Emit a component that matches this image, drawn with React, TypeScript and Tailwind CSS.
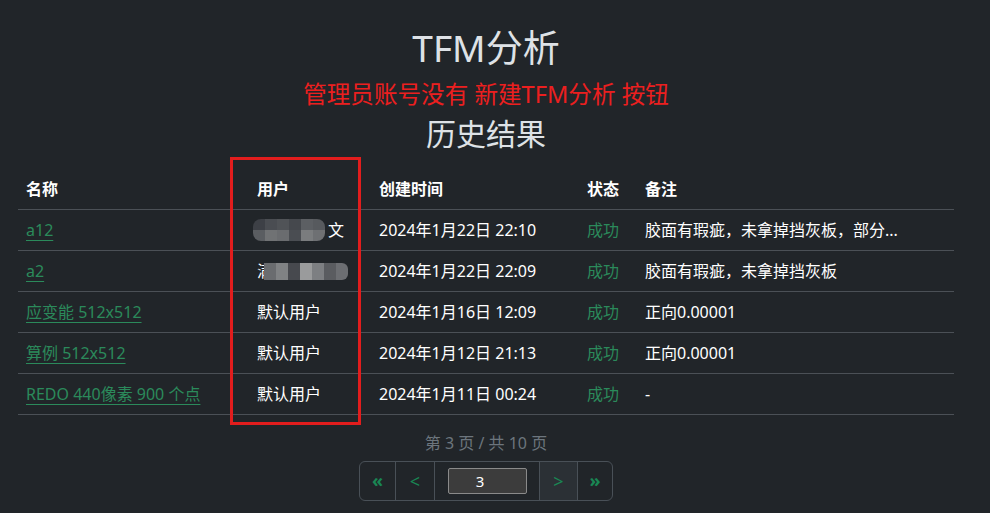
import React from "react";

const rows = [
  { name: "a12", user: "blur1", time: "2024年1月22日 22:10", note: "胶面有瑕疵，未拿掉挡灰板，部分..." },
  { name: "a2", user: "blur2", time: "2024年1月22日 22:09", note: "胶面有瑕疵，未拿掉挡灰板" },
  { name: "应变能 512x512", user: "默认用户", time: "2024年1月16日 12:09", note: "正向0.00001" },
  { name: "算例 512x512", user: "默认用户", time: "2024年1月12日 21:13", note: "正向0.00001" },
  { name: "REDO 440像素 900 个点", user: "默认用户", time: "2024年1月11日 00:24", note: "-" },
];

const blurTop = ["#3d4046", "#4a4d52", "#505357", "#45484d", "#5c5f63", "#575a5e"];
const blurBottom = ["#5a5d61", "#707274", "#6a6c6f", "#4a4d52", "#7a7c7e", "#6e7073"];
const blur2 = ["#6a6c6f", "#808284", "#47494e", "#9a9b9c", "#7d7f82", "#5a5c60", "#6c6e72"];

function Blur1() {
  return (
    <div className="flex items-center">
      <div className="flex flex-col overflow-hidden rounded-[8px] -ml-[4px]">
        <div className="flex">
          {blurTop.map((c, i) => (
            <div key={i} className="h-[11px] w-[12px]" style={{ backgroundColor: c }} />
          ))}
        </div>
        <div className="flex">
          {blurBottom.map((c, i) => (
            <div key={i} className="h-[11px] w-[12px]" style={{ backgroundColor: c }} />
          ))}
        </div>
      </div>
      <span className="ml-[3px]">文</span>
    </div>
  );
}

function Blur2() {
  return (
    <div className="flex items-center">
      <span className="inline-block w-[7px] overflow-hidden">满</span>
      <div className="flex overflow-hidden rounded-r-[6px]">
        {blur2.map((c, i) => (
          <div key={i} className="h-[17px] w-[12px]" style={{ backgroundColor: c }} />
        ))}
      </div>
    </div>
  );
}

export default function App() {
  return (
    <div className="relative h-[513px] w-full overflow-hidden bg-[#212529] font-['Noto_Sans','Noto_Sans_CJK_SC',sans-serif] text-[#dee2e6]">
      <div className="ml-[18px] w-[936px]">
        <div className="mt-[26px] flex h-[44px] items-center justify-center text-[37px] leading-[44px] text-[#dee2e6]">
          TFM分析
        </div>
        <div className="mt-[10px] flex h-[28px] items-center justify-center text-[23.6px] leading-[28px] text-[#ec1f1f]">
          管理员账号没有 新建TFM分析 按钮
        </div>
        <div className="mt-[8px] flex h-[36px] items-center justify-center text-[30px] leading-[36px] text-[#dee2e6]">
          历史结果
        </div>
        <table className="mt-[17px] w-[936px] table-fixed border-collapse text-[16px] leading-[24px] text-white">
          <colgroup>
            <col className="w-[231px]" />
            <col className="w-[122px]" />
            <col className="w-[208px]" />
            <col className="w-[58px]" />
            <col className="w-[317px]" />
          </colgroup>
          <thead>
            <tr className="border-b border-[#4b5056]">
              <th className="px-2 py-2 text-left font-bold">名称</th>
              <th className="px-2 py-2 text-left font-bold">用户</th>
              <th className="px-2 py-2 text-left font-bold">创建时间</th>
              <th className="px-2 py-2 text-left font-bold">状态</th>
              <th className="px-2 py-2 text-left font-bold">备注</th>
            </tr>
          </thead>
          <tbody>
            {rows.map((r, i) => (
              <tr key={i} className="border-b border-[#4b5056]">
                <td className="px-2 py-2">
                  <a className="text-[#2b8a5b] underline underline-offset-[4px] decoration-[#2b8a5b]">{r.name}</a>
                </td>
                <td className="px-2 py-2">
                  {r.user === "blur1" ? <Blur1 /> : r.user === "blur2" ? <Blur2 /> : r.user}
                </td>
                <td className="px-2 py-2 whitespace-nowrap">{r.time}</td>
                <td className="px-2 py-2 text-[#2b8a5b]">成功</td>
                <td className="px-2 py-2 whitespace-nowrap">{r.note}</td>
              </tr>
            ))}
          </tbody>
        </table>
        <div className="mt-[18px] flex h-[20px] items-center justify-center text-[16px] text-[#6c757d]">
          第 3 页 / 共 10 页
        </div>
        <div className="mt-[8px] flex justify-center">
          <div className="flex h-[40px] overflow-hidden rounded-[6px] border border-[#495057]">
            <div className="flex w-[35px] items-center justify-center pb-[2px] text-[18px] font-bold text-[#198754]">«</div>
            <div className="flex w-[39px] items-center justify-center border-l border-[#495057] text-[18px] text-[#198754]">&lt;</div>
            <div className="flex w-[105px] items-center justify-center border-l border-[#495057]">
              <div className="flex h-[26px] w-[79px] items-center justify-center rounded-[2px] border border-[#8a8a8a] bg-[#3c3c3c] pr-[14px] text-[15px] text-white">
                3
              </div>
            </div>
            <div className="flex w-[38px] items-center justify-center border-l border-[#495057] bg-[#2b3035] text-[18px] text-[#198754]">&gt;</div>
            <div className="flex w-[35px] items-center justify-center border-l border-[#495057] pb-[2px] text-[18px] font-bold text-[#198754]">»</div>
          </div>
        </div>
      </div>
      <div className="absolute left-[230px] top-[157px] h-[268px] w-[131px] border-[3px] border-[#e21d1d]" />
    </div>
  );
}
